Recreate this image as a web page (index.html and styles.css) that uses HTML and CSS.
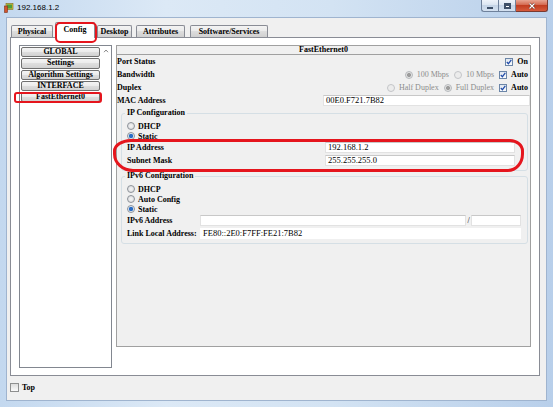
FILE: index.html
```html
<!DOCTYPE html>
<html lang="en">
<head>
  <meta charset="UTF-8">
  <title>192.168.1.2</title>
  <link rel="stylesheet" href="styles.css">
</head>
<body>
  <div class="window">
    <div class="titlebar">
      <svg class="app-icon" viewBox="0 0 10 10">
        <rect x="2" y="0.5" width="7" height="6" fill="#d8c23a" stroke="#7a6a20" stroke-width="0.6"/>
        <rect x="3" y="1.5" width="5" height="4" fill="#4d9c3c"/>
        <rect x="0.5" y="3" width="3" height="6.5" fill="#d2532e" stroke="#7a3418" stroke-width="0.6"/>
      </svg>
      <span class="title">192.168.1.2</span>
      <div class="controls">
        <span class="ctl ctl-min"><i></i></span>
        <span class="ctl ctl-max"><i></i></span>
        <span class="ctl ctl-close">
          <svg viewBox="0 0 10 8"><path d="M2.5 1.5 L7.5 6.5 M7.5 1.5 L2.5 6.5" stroke="#5a1a10" stroke-width="2.4"/><path d="M2.5 1.5 L7.5 6.5 M7.5 1.5 L2.5 6.5" stroke="#fff" stroke-width="1.3"/></svg>
        </span>
      </div>
    </div>

    <div class="client">
      <div class="tabs">
        <div class="tab tab-physical">Physical</div>
        <div class="tab tab-config active">Config</div>
        <div class="tab tab-desktop">Desktop</div>
        <div class="tab tab-attr">Attributes</div>
        <div class="tab tab-soft">Software/Services</div>
      </div>

      <div class="tab-panel">
        <div class="side">
          <div class="side-list">
            <div class="side-btn">GLOBAL</div>
            <div class="side-btn">Settings</div>
            <div class="side-btn">Algorithm Settings</div>
            <div class="side-btn">INTERFACE</div>
            <div class="side-btn">FastEthernet0</div>
          </div>
          <div class="side-scroll">
            <svg class="caret" viewBox="0 0 6 4"><path d="M1 3.2 L3 1 L5 3.2" fill="none" stroke="#8a8a8a" stroke-width="1"/></svg>
          </div>
        </div>

        <div class="main">
          <div class="main-head">FastEthernet0</div>

          <div class="row">
            <span class="lbl">Port Status</span>
            <span class="opt"><span class="check on"></span>On</span>
          </div>
          <div class="row">
            <span class="lbl">Bandwidth</span>
            <span class="opt off"><span class="radio dim-on"></span>100 Mbps</span>
            <span class="opt off"><span class="radio dim"></span>10 Mbps</span>
            <span class="opt"><span class="check on"></span>Auto</span>
          </div>
          <div class="row">
            <span class="lbl">Duplex</span>
            <span class="opt off"><span class="radio dim"></span>Half Duplex</span>
            <span class="opt off"><span class="radio dim-on"></span>Full Duplex</span>
            <span class="opt"><span class="check on"></span>Auto</span>
          </div>
          <div class="row row-mac">
            <span class="lbl">MAC Address</span>
            <span class="field field-mac">00E0.F721.7B82</span>
          </div>

          <fieldset class="group">
            <legend>IP Configuration</legend>
            <div class="g-radio"><span class="radio"></span>DHCP</div>
            <div class="g-radio"><span class="radio on"></span>Static</div>
            <div class="g-row">
              <span class="g-lbl g-lbl-ip">IP Address</span>
              <span class="field field-ip">192.168.1.2</span>
            </div>
            <div class="g-row">
              <span class="g-lbl g-lbl-ip">Subnet Mask</span>
              <span class="field field-ip">255.255.255.0</span>
            </div>
          </fieldset>

          <fieldset class="group group-v6">
            <legend>IPv6 Configuration</legend>
            <div class="g-radio"><span class="radio"></span>DHCP</div>
            <div class="g-radio"><span class="radio"></span>Auto Config</div>
            <div class="g-radio"><span class="radio on"></span>Static</div>
            <div class="g-row">
              <span class="g-lbl g-lbl-v6">IPv6 Address</span>
              <span class="field field-v6"></span>
              <span class="slash">/</span>
              <span class="field field-prefix"></span>
            </div>
            <div class="g-row">
              <span class="g-lbl g-lbl-v6">Link Local Address:</span>
              <span class="field field-link">FE80::2E0:F7FF:FE21:7B82</span>
            </div>
          </fieldset>
        </div>
      </div>

      <div class="bottom">
        <span class="check check-top"></span>Top
      </div>
    </div>

    <div class="mark mark-tab"></div>
    <div class="mark mark-iface"></div>
    <div class="mark mark-ip"></div>
  </div>
</body>
</html>
```

FILE: styles.css
```css
* {
  box-sizing: border-box;
  margin: 0;
  padding: 0;
}

body {
  font-family: "Liberation Serif", "DejaVu Serif", serif;
  font-size: 8px;
  font-weight: bold;
  color: #000;
  background: #fff;
}

.window {
  position: relative;
  width: 553px;
  height: 407px;
  background: linear-gradient(90deg, #c3d8ef 0%, #dce9f6 30%, #d3e3f3 60%, #b8cfea 100%);
  overflow: hidden;
}

/* title bar */
.titlebar {
  display: flex;
  align-items: flex-start;
  height: 17px;
}

.app-icon {
  width: 10px;
  height: 10px;
  margin: 3px 0 0 4px;
}

.title {
  font-family: "Liberation Sans", Arial, sans-serif;
  font-weight: normal;
  font-size: 8px;
  line-height: 10px;
  margin: 3px 0 0 3px;
}

.controls {
  display: flex;
  margin-left: auto;
  margin-right: 5px;
  height: 12px;
}

.ctl {
  display: flex;
  align-items: center;
  justify-content: center;
  height: 12px;
  border: 1px solid #6f819b;
  border-top: none;
  background: linear-gradient(#eef3fa, #dbe5f1 45%, #c5d4e7 50%, #d4e1f0);
}

.ctl-min {
  width: 17px;
  border-radius: 0 0 0 3px;
  border-right: none;
}

.ctl-min i {
  width: 6px;
  height: 2px;
  margin-top: 4px;
  background: #fff;
  border: 1px solid #3d4f68;
}

.ctl-max {
  width: 18px;
}

.ctl-max i {
  width: 7px;
  height: 6px;
  border: 1px solid #3d4f68;
  border-top-width: 2px;
  background: #fff;
  box-shadow: inset 0 0 0 1px #3d4f68;
}

.ctl-close {
  width: 32px;
  border-left: none;
  border-color: #7a3a30;
  border-radius: 0 0 3px 0;
  background: linear-gradient(#e8a593, #d4684f 45%, #c23d21 50%, #d65a3c);
}

.ctl-close svg {
  width: 10px;
  height: 8px;
}

/* client area */
.client {
  margin: 0 6px;
  height: 384px;
  background: #f0f0f0;
  border: 1px solid #9fb4cf;
}

.tabs {
  display: flex;
  align-items: flex-end;
  height: 19px;
  padding-left: 4px;
}

.tab {
  height: 12px;
  border: 1px solid #898c95;
  border-bottom: none;
  border-radius: 2px 2px 0 0;
  background: linear-gradient(#f3f3f3, #ebebeb 45%, #dddddd 50%, #d0d0d0);
  line-height: 11px;
  text-align: center;
}

.tab.active {
  position: relative;
  height: 16px;
  margin-bottom: -1px;
  background: #fff;
  line-height: 14px;
}

.tab-physical { width: 42px; }
.tab-config { width: 40px; margin-left: 2px; }
.tab-desktop { width: 35px; margin-left: 2px; }
.tab-attr { width: 49px; margin-left: 4px; }
.tab-soft { width: 78px; margin-left: 5px; }

.tab-panel {
  display: flex;
  align-items: flex-start;
  margin-left: 3px;
  width: 530px;
  height: 339px;
  border: 1px solid #898c95;
  background: #fff;
  padding: 7px 0 0 8px;
}

/* interface list */
.side {
  display: flex;
  width: 93px;
  height: 323px;
  border: 1px solid #828790;
}

.side-list {
  flex: 1;
  padding-top: 1px;
}

.side-btn {
  height: 10.3px;
  margin: 0 1px 1px;
  border: 1px solid #707070;
  border-radius: 2px;
  background: linear-gradient(#f4f4f4, #ececec 45%, #dedede 50%, #d2d2d2);
  line-height: 8.3px;
  text-align: center;
  white-space: nowrap;
}

.side-scroll {
  width: 10px;
  display: flex;
  justify-content: center;
  padding-top: 3px;
}

.caret {
  width: 6px;
  height: 4px;
}

/* interface panel */
.main {
  margin-left: 4px;
  width: 415px;
  height: 302px;
  border: 1px solid #a0a0a0;
  background: #f0f0f0;
}

.main-head {
  height: 9px;
  border-bottom: 1px solid #a0a0a0;
  line-height: 8px;
  text-align: center;
}

.row {
  display: flex;
  align-items: center;
  height: 13px;
  padding-right: 2px;
  white-space: nowrap;
}

.row-mac {
  padding-right: 0;
}

.lbl {
  flex: 1;
}

.opt {
  display: flex;
  align-items: center;
  gap: 4px;
  margin-left: 5px;
}

.opt.off {
  color: #8d8d8d;
  font-weight: normal;
}

.check {
  width: 8px;
  height: 8px;
  border: 1px solid #8e8f8f;
  background: linear-gradient(#dcdcdc, #fbfbfb);
}

.check.on {
  border-color: #6c86a8;
  background: url("data:image/svg+xml,%3Csvg xmlns='http://www.w3.org/2000/svg' viewBox='0 0 6 6'%3E%3Cpath d='M0.8 3 L2.4 4.7 L5.3 0.9' fill='none' stroke='%231f4aa8' stroke-width='1.2'/%3E%3C/svg%3E") center / 6px 6px no-repeat, linear-gradient(#dfe6ef, #fbfcfd);
}

.radio {
  width: 8px;
  height: 8px;
  border-radius: 50%;
  border: 1px solid #8d9299;
  background: radial-gradient(circle, #f6f6f6, #d4d6d9);
}

.radio.on {
  background: radial-gradient(circle, #2a6dc6 0 1.6px, #6d9fd8 2.1px, #e6edf5 2.6px);
}

.radio.dim {
  border-color: #c3c5c8;
  background: #ececec;
}

.radio.dim-on {
  border-color: #b6b9bd;
  background: radial-gradient(circle, #9c9c9c 0 1.6px, #e3e3e3 2.4px);
}

.field {
  display: block;
  height: 11px;
  background: #fff;
  border: 1px solid #e2e2e2;
  border-top-color: #c8c8c8;
  padding-left: 2px;
  font-size: 8.5px;
  font-weight: normal;
  line-height: 9px;
  white-space: nowrap;
}

.field-mac { width: 207px; }
.field-ip { width: 190px; }
.field-v6 { width: 266px; }
.field-prefix { width: 50px; }
.field-link {
  width: 321px;
  border-color: #fff;
}

/* group boxes */
.group {
  margin: 1px 2px 0 4px;
  border: 1px solid #d5dfe5;
  border-radius: 3px;
  padding: 3px 0 3px 5px;
}

.group-v6 {
  margin-top: 0;
}

.group legend {
  line-height: 10px;
  padding: 0 2px;
  margin-left: -2px;
}

.g-radio {
  display: flex;
  align-items: center;
  gap: 3px;
  height: 10px;
}

.g-row {
  display: flex;
  align-items: center;
  height: 13px;
  white-space: nowrap;
}

.g-lbl-ip { width: 198px; }
.g-lbl-v6 { width: 73px; }

.slash {
  width: 5px;
  text-align: center;
  font-weight: normal;
}

/* bottom */
.bottom {
  display: flex;
  align-items: center;
  gap: 3px;
  height: 10px;
  margin: 6px 0 0 3px;
}

.check-top {
  width: 9px;
  height: 9px;
}

/* red annotation marks */
.mark {
  position: absolute;
  border: 2.5px solid #e5151d;
}

.mark-tab {
  left: 55px;
  top: 22px;
  width: 42px;
  height: 21px;
  border-radius: 5px;
}

.mark-iface {
  left: 14px;
  top: 92px;
  width: 88px;
  height: 11px;
  border-radius: 3px;
}

.mark-ip {
  left: 113px;
  top: 139px;
  width: 411px;
  height: 33px;
  border-width: 3px;
  border-radius: 18px 14px 16px 20px / 12px 12px 18px 18px;
}
```
